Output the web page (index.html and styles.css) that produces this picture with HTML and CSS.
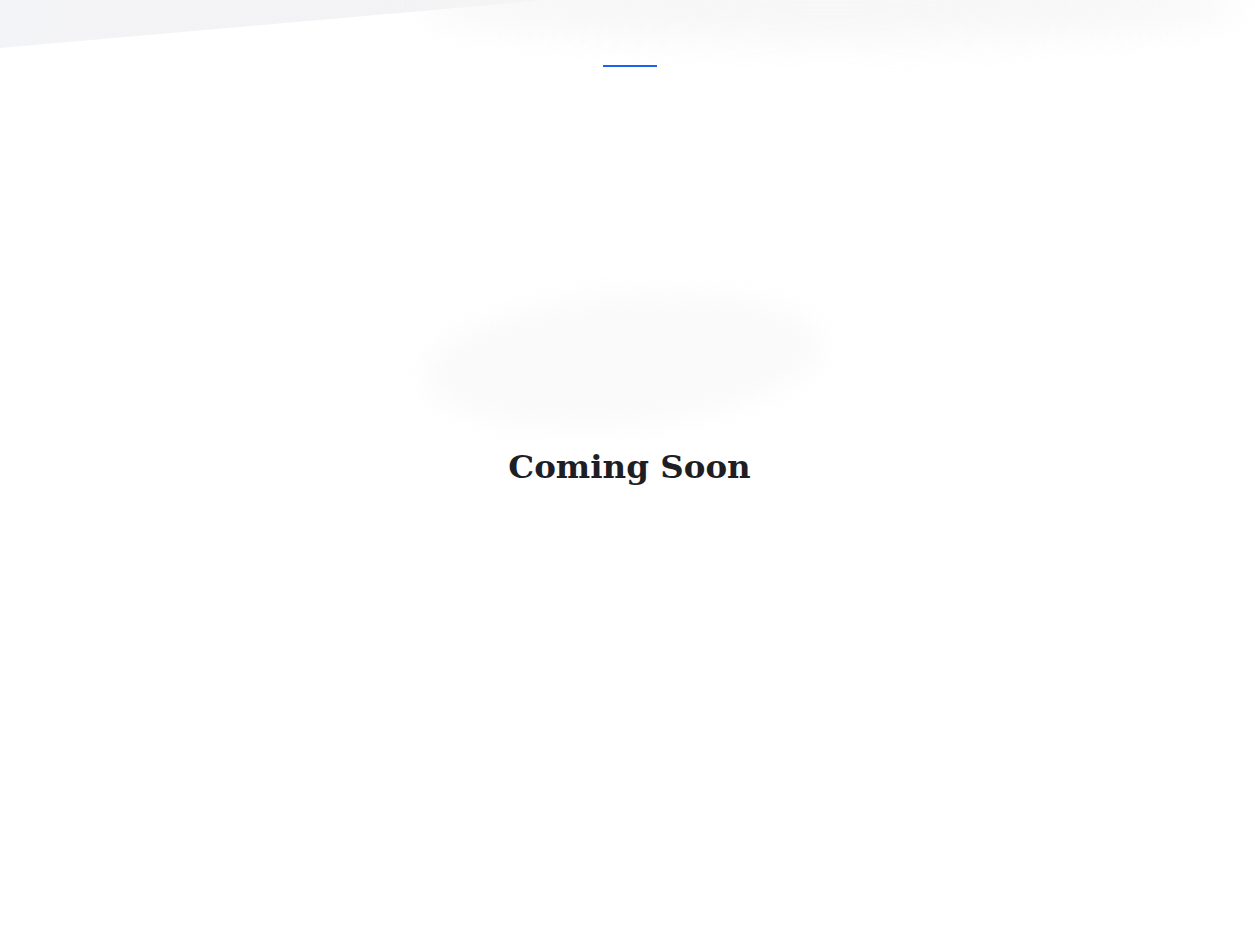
FILE: index.html
```html
<!DOCTYPE html>
<html lang="en">
<head>
<meta charset="utf-8">
<title>Coming Soon</title>
<link rel="stylesheet" href="styles.css">
</head>
<body>
<header class="top">
  <div class="top-slant"></div>
  <div class="top-shadow"></div>
  <nav class="nav"><a class="nav-link" href="#"></a></nav>
</header>
<main class="hero">
  <div class="blob"></div>
  <h1 class="title">Coming Soon</h1>
</main>
</body>
</html>
```
FILE: styles.css
```css
html, body {
  margin: 0;
  padding: 0;
  background: #ffffff;
  height: 100%;
}
body {
  font-family: "DejaVu Serif", "Liberation Serif", serif;
  overflow: hidden;
}
.top {
  position: relative;
  height: 100px;
}
.top-slant {
  position: absolute;
  left: 0;
  top: 0;
  width: 700px;
  height: 48px;
  background: linear-gradient(90deg, #f3f4f7 0%, #f3f3f5 60%, #f7f7f8 100%);
  clip-path: polygon(0 0, 100% 0, 78% 0, 0 100%);
}
.top-shadow {
  position: absolute;
  left: 420px;
  top: -30px;
  width: 820px;
  height: 70px;
  border-radius: 50%;
  background: #f5f5f5;
  filter: blur(18px);
  opacity: 0.8;
}
.nav {
  position: relative;
  display: flex;
  justify-content: center;
  padding-top: 65px;
}
.nav-link {
  display: block;
  width: 54px;
  height: 2px;
  background: #1a62f0;
  margin-left: 5px;
}
.hero {
  display: flex;
  flex-direction: column;
  align-items: center;
}
.blob {
  width: 400px;
  height: 130px;
  margin-top: 195px;
  margin-left: -10px;
  border-radius: 50%;
  background: #fafafa;
  filter: blur(14px);
  transform: rotate(-5deg);
}
.title {
  margin: 22px 0 0 4px;
  font-size: 32.5px;
  font-weight: bold;
  color: #1e1f24;
  letter-spacing: 0;
}
```
